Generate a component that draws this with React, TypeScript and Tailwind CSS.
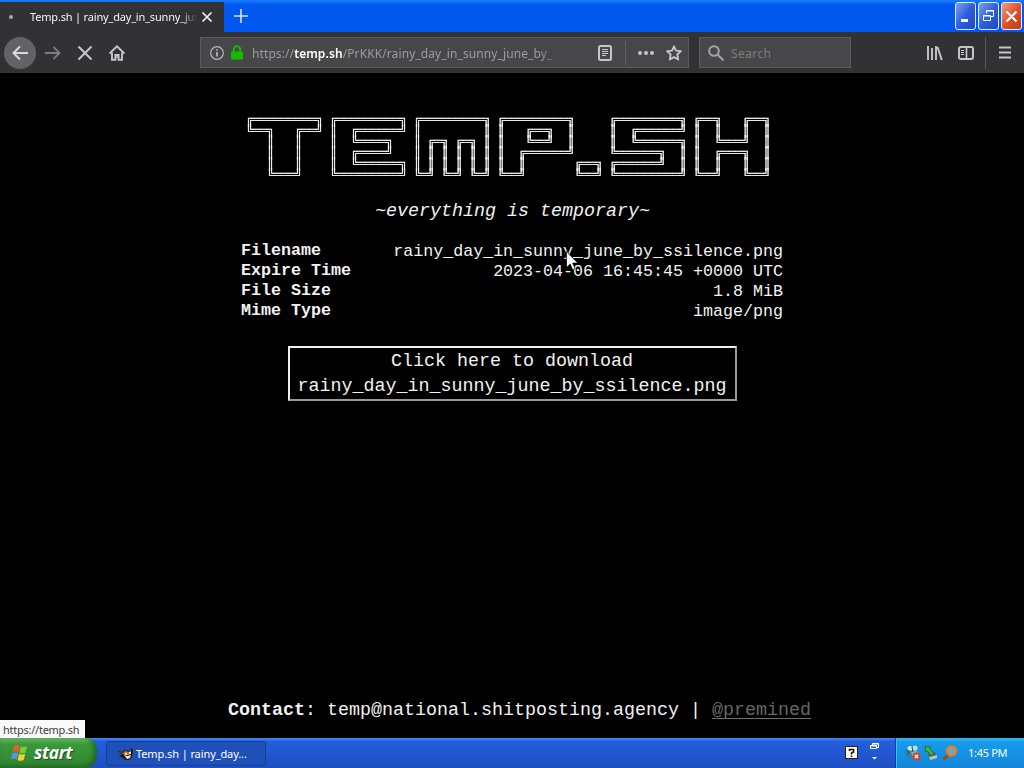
import type { ReactNode } from "react";
import { clsx } from "clsx";

const BANNER = [
  "╔═════════╗ ╔═════════╗ ╔═════════╗ ╔═════════╗     ╔═════════╗ ╔══╗   ╔══╗",
  "╚══╗   ╔══╝ ║  ╔══════╝ ║         ║ ║   ╔══╗  ║     ║  ╔══════╝ ║  ║   ║  ║",
  "   ║   ║    ║  ╚════╗   ║ ╔═╗ ╔═╗ ║ ║   ╚══╝  ║     ║  ╚══════╗ ║  ╚═══╝  ║",
  "   ║   ║    ║  ╔════╝   ║ ║ ║ ║ ║ ║ ║  ╔══════╝     ╚══════╗  ║ ║  ╔═══╗  ║",
  "   ║   ║    ║  ╚══════╗ ║ ║ ║ ║ ║ ║ ║  ║       ╔══╗ ╔══════╝  ║ ║  ║   ║  ║",
  "   ╚═══╝    ╚═════════╝ ╚═╝ ╚═╝ ╚═╝ ╚══╝       ╚══╝ ╚═════════╝ ╚══╝   ╚══╝",
].join("\n");

const DETAILS = [
  { label: "Filename", value: "rainy_day_in_sunny_june_by_ssilence.png" },
  { label: "Expire Time", value: "2023-04-06 16:45:45 +0000 UTC" },
  { label: "File Size", value: "1.8 MiB" },
  { label: "Mime Type", value: "image/png" },
];

function WindowButton({ close, children }: { close?: boolean; children: ReactNode }) {
  return (
    <button
      className={clsx(
        "flex h-7 w-[21px] items-center justify-center rounded-[3px] border border-[#e4ecff]",
        close
          ? "bg-linear-to-br from-[#ec9c80] via-[#e0522a] to-[#c23a12]"
          : "bg-linear-to-br from-[#7f9ff0] via-[#2c5ee0] to-[#1c49c8]",
      )}
    >
      {children}
    </button>
  );
}

function TitleBar() {
  return (
    <div className="flex h-8 shrink-0 bg-linear-to-b from-[#1a7dff] via-[#0058ee] via-15% to-[#0257f0]">
      <div className="mt-0.5 flex w-[224px] items-center bg-[#323234]">
        <span className="ml-[9px] size-1 rounded-full bg-[#a9a9ab]" />
        <span className="ml-[17px] w-[166px] whitespace-nowrap text-[11px] tracking-[-0.18px] text-[#f4f4f5] [mask-image:linear-gradient(to_right,black_150px,transparent_167px)]">
          Temp.sh | rainy_day_in_sunny_jun
        </span>
        <svg className="ml-[5px] size-3" viewBox="0 0 12 12" stroke="#f4f4f5" strokeWidth="1.7">
          <path d="M1.5 1.5l9 9M10.5 1.5l-9 9" />
        </svg>
      </div>
      <svg className="mt-[9px] ml-[10px] size-[14px]" viewBox="0 0 14 14" stroke="#d6e4ff" strokeWidth="1.6">
        <path d="M7 0v14M0 7h14" />
      </svg>
      <div className="mt-0.5 mr-0.5 ml-auto flex gap-0.5">
        <WindowButton>
          <svg width="17" height="20" viewBox="0 0 17 20">
            <rect x="4" y="13" width="7" height="3" fill="white" />
          </svg>
        </WindowButton>
        <WindowButton>
          <svg width="13" height="14" viewBox="0 0 13 14" fill="none" stroke="white">
            <path d="M4.5 4.5v-3h7v6h-3M4 2h8" />
            <path d="M1.5 6.5h7v5h-7zM1 7h8" />
          </svg>
        </WindowButton>
        <WindowButton close>
          <svg width="13" height="13" viewBox="0 0 13 13" stroke="white" strokeWidth="2.1">
            <path d="M1.5 1.5l10 10M11.5 1.5l-10 10" />
          </svg>
        </WindowButton>
      </div>
    </div>
  );
}

function NavBar() {
  return (
    <div className="flex h-[41px] shrink-0 items-center bg-[#323234] text-[#c6c6c8]">
      <div className="ml-1 flex size-8 items-center justify-center rounded-full bg-[#636365]">
        <svg className="size-4" viewBox="0 0 16 16" fill="none" stroke="#dadadb" strokeWidth="2">
          <path d="M16 8H1.5M8 1.5L1.5 8 8 14.5" />
        </svg>
      </div>
      <svg className="ml-[9px] size-4" viewBox="0 0 16 16" fill="none" stroke="#7c7c7e" strokeWidth="1.8">
        <path d="M0 8h14.5M8.5 2l6 6-6 6" />
      </svg>
      <svg className="ml-4 size-4" viewBox="0 0 16 16" stroke="currentColor" strokeWidth="2">
        <path d="M1.5 1.5l13 13M14.5 1.5l-13 13" />
      </svg>
      <svg className="ml-4 size-4" viewBox="0 0 16 16" fill="none" stroke="currentColor" strokeWidth="1.9">
        <path d="M.5 8.5L8 1.3l7.5 7.2" />
        <path d="M3 7.5v7.3h3.4V10h3.2v4.8H13V7.5" />
        <path d="M7.2 12h1.6" />
      </svg>

      <div className="ml-[75px] flex h-[31px] w-[489px] items-center border border-[#5b5b5d] bg-[#474749]">
        <svg className="ml-[9px] size-[14px]" viewBox="0 0 14 14" fill="none" stroke="#b8b8ba" strokeWidth="1.2">
          <circle cx="7" cy="7" r="6.3" />
          <path d="M7 6v4.5M7 3.3v1.5" strokeWidth="1.7" />
        </svg>
        <svg className="ml-[7px] h-[15px] w-3" viewBox="0 0 12 15" fill="none">
          <path d="M2.8 7V4.5a3.2 3.2 0 0 1 6.4 0V7" stroke="#12bc00" strokeWidth="1.9" />
          <rect y="6.5" width="12" height="8" rx="1.2" fill="#12bc00" />
        </svg>
        <span className="mt-0.5 ml-[9px] w-[309px] whitespace-nowrap text-[12px] tracking-[0.1px] text-[#9c9c9e] [mask-image:linear-gradient(to_right,black_288px,transparent_309px)]">
          https://<span className="font-semibold text-white">temp.sh</span>
          /PrKKK/rainy_day_in_sunny_june_by_
        </span>
        <svg className="ml-[37px] h-4 w-[14px]" viewBox="0 0 14 16" fill="none" stroke="#c6c6c8">
          <rect x="1" y="1" width="12" height="14" rx="1.5" strokeWidth="2" />
          <path d="M4 4.5h6M4 6.5h6M4 8.5h6M4 10.5h4" />
        </svg>
        <span className="ml-[13px] h-6 w-px bg-[#626264]" />
        <span className="ml-3 flex gap-[2px]">
          <i className="size-1 rounded-full bg-[#c6c6c8]" />
          <i className="size-1 rounded-full bg-[#c6c6c8]" />
          <i className="size-1 rounded-full bg-[#c6c6c8]" />
        </span>
        <svg className="ml-3 size-4" viewBox="0 0 16 16" fill="none" stroke="#c6c6c8" strokeWidth="1.8" strokeLinejoin="round">
          <path d="M8 1.3l2 4.3 4.9.6-3.6 3.3.9 5L8 12.1l-4.2 2.4.9-5L1.1 6.2 6 5.6z" />
        </svg>
      </div>

      <div className="ml-[10px] flex h-[31px] w-[152px] items-center border border-[#5b5b5d] bg-[#474749]">
        <svg className="ml-2 size-4" viewBox="0 0 16 16" fill="none" stroke="#a2a2a4" strokeWidth="2.1">
          <circle cx="6" cy="6" r="4.8" />
          <path d="M9.5 9.5l6 6" />
        </svg>
        <span className="mt-0.5 ml-[7px] text-[12px] tracking-[0.4px] text-[#7d7d7f]">Search</span>
      </div>

      <svg className="ml-[75px] h-4 w-[17px]" viewBox="0 0 17 16" stroke="currentColor" strokeWidth="1.9">
        <path d="M2 1v14M6 3v12M10 1v14M11.5 2l4.3 13" />
      </svg>
      <svg className="ml-[15px] size-4" viewBox="0 0 16 16" fill="none" stroke="currentColor">
        <rect x="1" y="2" width="14" height="12" rx="2" strokeWidth="2" />
        <path d="M8.5 2v12" strokeWidth="1.6" />
        <path d="M3 5.5h3M3 7.5h3M3 9.5h3" />
      </svg>
      <span className="ml-[11px] h-8 w-px bg-[#58585a]" />
      <svg className="ml-[13px] h-[13px] w-3" viewBox="0 0 12 13" stroke="currentColor" strokeWidth="2">
        <path d="M0 1.5h12M0 6.5h12M0 11.5h12" />
      </svg>
    </div>
  );
}

function TempPage() {
  return (
    <main className="relative flex flex-1 flex-col items-center bg-black font-['Liberation_Mono',monospace] text-[#f2f2f2]">
      <pre className="mt-[42px] mr-[7px] font-['Liberation_Mono',monospace] text-[11.667px] leading-[11px] text-white opacity-99 will-change-transform [-webkit-text-stroke:0.3px_white]">
        {BANNER}
      </pre>
      <p className="mt-[21px] ml-px text-[18.33px] leading-5 italic">~everything is temporary~</p>
      <dl className="mt-[19px] mr-px flex w-[543px] flex-col text-[16.667px] leading-5">
        {DETAILS.map((d) => (
          <div key={d.label} className="flex justify-between">
            <dt className="ml-px font-bold">{d.label}</dt>
            <dd className="pt-px leading-[19px]">{d.value}</dd>
          </div>
        ))}
      </dl>
      <button className="mt-[25px] w-[449px] border-2 border-t-[#efefef] border-r-[#9a9a9a] border-b-[#9a9a9a] border-l-[#efefef] pt-px text-[18.33px] leading-[25px]">
        Click here to download
        <br />
        rainy_day_in_sunny_june_by_ssilence.png
      </button>
      <footer className="mt-auto mb-[15px] ml-[15px] text-[18.33px] leading-[25px] whitespace-pre">
        <b>Contact</b>: temp@national.shitposting.agency |{" "}
        <a className="text-[#666666] underline decoration-[#707070] decoration-1 underline-offset-[3px] [text-decoration-skip-ink:none]">
          @premined
        </a>
      </footer>

      {/* link target shown while hovering */}
      <div className="absolute bottom-0 left-0 h-[18px] w-[85px] bg-[#f9f9fa] pl-[3px] font-['Noto_Sans',sans-serif] text-[11px] leading-[19px] tracking-[-0.25px] whitespace-nowrap text-[#404042]">
        https://temp.sh
      </div>
      <svg className="absolute top-[178px] left-[566px] h-5 w-3" viewBox="0 0 12 20">
        <path d="M.5.5v16l3.7-3.5 2.4 5.8 2.6-1.1-2.5-5.6h5z" fill="white" stroke="black" strokeWidth=".7" />
      </svg>
    </main>
  );
}

function Taskbar() {
  return (
    <div className="flex h-[30px] shrink-0 bg-linear-to-b from-[#3f8cf3] via-[#245ddb] via-12% to-[#1f4fc4]">
      <button className="flex w-[97px] items-center rounded-r-[12px] bg-linear-to-b from-[#6cbb68] via-[#3a9a3a] via-20% to-[#2f8430] shadow-[inset_-3px_-2px_5px_#1f6322]">
        <svg className="ml-[11px] h-[18px] w-[18px]" viewBox="0 0 18 18">
          <path d="M3.2 1.8C5 .6 7 .7 8.8 1.8L7.4 8C5.6 7 3.700 7 1.700 8z" fill="#ee5c2c" />
          <path d="M9.800 2.200c2 1.100 4 1.100 6.200 0L14.500 8.600c-2 1-4 1-6.100-.1z" fill="#7dcb3c" />
          <path d="M1.400 9.200c2-1.100 4-1.100 5.800 0L5.700 15.300c-1.800-1-3.700-1-5.700 0z" fill="#5c93f0" />
          <path d="M8.100 9.700c2 1.100 4 1.100 6.100.1L12.700 16c-2 1-4 1-6.100-.1z" fill="#f8cc34" />
        </svg>
        <span className="ml-[5px] font-['Open_Sans',sans-serif] text-[17.5px] leading-none font-bold tracking-[-0.4px] text-white italic [text-shadow:1px_1px_1px_#1d4d1d]">
          start
        </span>
      </button>
      <button className="mt-[3px] ml-[9px] flex h-[25px] w-[160px] items-center rounded-[2px] border border-[#1a3f98] bg-[#1f50b8] text-[11px] text-white">
        <svg className="ml-[11px] h-[14px] w-[15px]" viewBox="0 0 15 14">
          <path d="M0 4l4 1 3-2 4 1 3-3 1 4-1 5-3 3H7L5 11 1 9l3-1z" fill="#24180f" />
          <path d="M1 5l4 1 2-2 4 1 2-2v3l-2 2H7z" fill="#b87838" />
          <path d="M6 8l3 1 4-1-1 3-3 1z" fill="#f0e4cc" />
          <circle cx="8" cy="7" r="1" fill="#fff" />
          <circle cx="12" cy="6" r="1" fill="#fff" />
        </svg>
        <span className="mt-px ml-[3px] tracking-[-0.1px]">Temp.sh | rainy_day...</span>
      </button>
      <div className="ml-auto flex items-center">
        <svg className="mr-[11px] size-[14px]" viewBox="0 0 14 14">
          <rect x=".5" y=".5" width="12" height="12" fill="#fffbe8" stroke="#222" />
          <path d="M4.500 5V3.500h4V6L6.500 7v1.500M6.500 9.500v1.500" fill="none" stroke="#111" strokeWidth="1.500" />
        </svg>
        <svg className="mr-4 mb-1 h-[18px] w-[9px]" viewBox="0 0 9 18" fill="none" stroke="white">
          <path d="M2.500 3V1.500h6v4H7M2 2h7" />
          <path d="M.5 3.500h6v3h-6zM0 4h7" />
          <path d="M2 15h5l-2.500 2.500z" fill="white" stroke="none" />
        </svg>
      </div>
      <div className="flex w-[129px] items-center border-l border-[#0f3fa0] bg-linear-to-b from-[#35b4f5] via-[#159bea] via-15% to-[#1585dc] shadow-[inset_1px_0_#3cc0fa]">
        <svg className="ml-[9px] size-4" viewBox="0 0 16 16">
          <circle cx="5" cy="3.500" r="2.500" fill="#d5ecdd" />
          <path d="M0 7l4-2 4 2v6H3z" fill="#397f9d" />
          <circle cx="10" cy="3" r="2.600" fill="#b8dde4" />
          <path d="M6 7l4-2 4 3v4l-6 1z" fill="#7cb6c0" />
          <path d="M1 4l3 3-2 3M7 2l1 5" stroke="#174e68" fill="none" />
          <circle cx="11.500" cy="11.500" r="4" fill="#da3820" />
          <path d="M9.800 9.800l3.400 3.400M13.200 9.800l-3.400 3.400" stroke="white" strokeWidth="1.300" />
        </svg>
        <svg className="ml-[3px] size-4" viewBox="0 0 16 16">
          <path d="M4 8l7-1 2 5-8 3z" fill="#536470" />
          <path d="M5 12l8-2v3l-7 2z" fill="#b8c6bc" />
          <path d="M1 1l6 1-1.500 1.500L10 8l-2 3-5-5-1.500 1z" fill="#39b738" stroke="#126122" strokeWidth=".7" />
        </svg>
        <svg className="ml-[2px] size-4" viewBox="0 0 16 16" fill="none">
          <path d="M6 10l-4.500 4.500" stroke="#a04c10" strokeWidth="3" />
          <circle cx="9.500" cy="6" r="4.700" stroke="#e8801c" strokeWidth="2.200" fill="#79a4bc" />
        </svg>
        <span className="ml-[10px] text-[11px] tracking-[-0.3px] whitespace-nowrap text-white">1:45 PM</span>
      </div>
    </div>
  );
}

export default function App() {
  return (
    <div className="flex h-[768px] w-[1024px] flex-col overflow-hidden bg-black font-['Noto_Sans',sans-serif]">
      <TitleBar />
      <NavBar />
      <TempPage />
      <Taskbar />
    </div>
  );
}
